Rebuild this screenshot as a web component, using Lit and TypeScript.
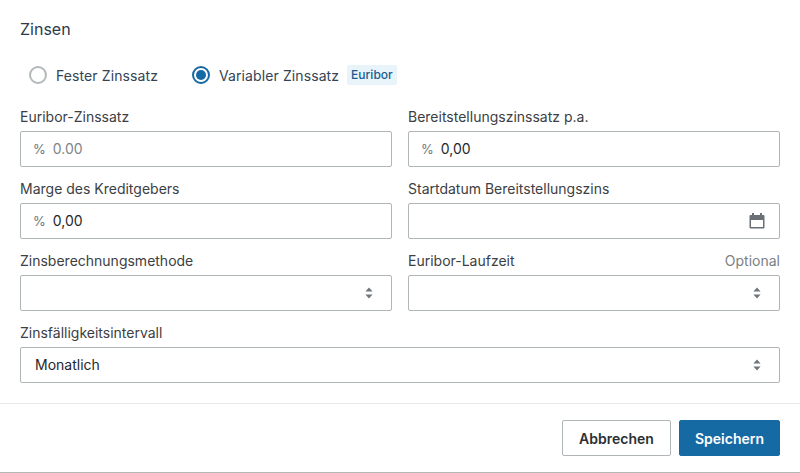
import { LitElement, html, css, svg } from "lit";
import { customElement } from "lit/decorators.js";

const updown = html`<svg class="updown" width="8" height="12" viewBox="0 0 8 12"><path d="M4 0.5 L7.6 4.5 H0.4 Z M4 11.5 L0.4 7.5 H7.6 Z" fill="#6f767c"/></svg>`;

@customElement("app-root")
export class AppRoot extends LitElement {
  static styles = css`
    :host { display: block; width: 800px; height: 473px; box-sizing: border-box; background: #fff; font-family: Inter, "Liberation Sans", sans-serif; color: #2f3d4d; border-bottom: 1px solid #b4b8bb; overflow: hidden; }
    .body { padding: 19px 20px 0; height: 383px; box-sizing: border-box; }
    h2 { margin: 0; font-size: 16px; line-height: 20px; font-weight: 400; color: #2b3a4b; }
    .radios { display: flex; align-items: center; margin: 26px 0 0 9px; height: 20px; }
    .radio { display: flex; align-items: center; gap: 9px; font-size: 14px; letter-spacing: 0.1px; color: #344354; }
    .radio + .radio { margin-left: 34px; }
    .dot { width: 18px; height: 18px; box-sizing: border-box; border-radius: 50%; border: 2px solid #b3b8bb; }
    .dot.on { border-color: #166aa4; display: flex; align-items: center; justify-content: center; }
    .dot.on::after { content: ""; width: 10px; height: 10px; border-radius: 50%; background: #166aa4; }
    .badge { margin-left: 8px; font-size: 12px; font-weight: 500; line-height: 20px; padding: 0 4px; border-radius: 2px; background: #e9f3fa; color: #185d8f; }
    .grid { display: grid; grid-template-columns: 372px 372px; column-gap: 16px; row-gap: 12px; margin-top: 22px; }
    .full { grid-column: 1 / 3; }
    .lab { display: flex; justify-content: space-between; font-size: 14px; line-height: 20px; height: 24px; color: #3c4043; }
    .opt { color: #7b8084; }
    .box { height: 36px; box-sizing: border-box; border: 1px solid #b0b5b8; border-radius: 2px; display: flex; align-items: center; padding: 0 14px 0 12px; font-size: 14px; color: #24282c; }
    .pct { color: #6f767c; font-size: 13px; margin-right: 7px; }
    .txt { padding-bottom: 1px; }
    .ph { color: #7f8488; }
    .sel { padding-left: 14px; padding-right: 18px; justify-content: space-between; }
    .updown, .cal { margin-left: auto; flex: none; }
    .foot { border-top: 1px solid #e6e8e9; padding: 16px 20px 0; display: flex; justify-content: flex-end; gap: 8px; margin-top: 20px; }
    button { height: 36px; box-sizing: border-box; border-radius: 2px; font: 600 14px Inter, "Liberation Sans", sans-serif; padding: 0; cursor: pointer; }
    .sec { width: 109px; background: #fff; border: 1px solid #b0b5b8; color: #2b2f33; }
    .pri { width: 101px; background: #166aa4; border: 1px solid #166aa4; color: #fff; }
  `;

  private money(v: string, ph = false) {
    return html`<div class="box"><span class="pct">%</span><span class="txt ${ph ? "ph" : ""}">${v}</span></div>`;
  }

  render() {
    return html`
      <div class="body">
        <h2>Zinsen</h2>
        <div class="radios">
          <label class="radio"><span class="dot"></span>Fester Zinssatz</label>
          <label class="radio"><span class="dot on"></span>Variabler Zinssatz</label>
          <span class="badge">Euribor</span>
        </div>
        <div class="grid">
          <div><div class="lab">Euribor-Zinssatz</div>${this.money("0.00", true)}</div>
          <div><div class="lab">Bereitstellungszinssatz p.a.</div>${this.money("0,00")}</div>
          <div><div class="lab">Marge des Kreditgebers</div>${this.money("0,00")}</div>
          <div><div class="lab">Startdatum Bereitstellungszins</div>
            <div class="box"><svg class="cal" width="16" height="16" viewBox="0 0 16 16">${svg`<path fill-rule="evenodd" d="M3 0h2v2h6V0h2v2h1.5A1 1 0 0 1 15.5 3v11.5a1 1 0 0 1-1 1h-13a1 1 0 0 1-1-1V3a1 1 0 0 1 1-1H3Z M2 7v7h12V7Z" fill="#6a7075"/>`}</svg></div></div>
          <div><div class="lab">Zinsberechnungsmethode</div><div class="box sel">${updown}</div></div>
          <div><div class="lab"><span>Euribor-Laufzeit</span><span class="opt">Optional</span></div><div class="box sel">${updown}</div></div>
          <div class="full"><div class="lab">Zinsfälligkeitsintervall</div><div class="box sel"><span class="txt">Monatlich</span>${updown}</div></div>
        </div>
      </div>
      <div class="foot">
        <button class="sec">Abbrechen</button>
        <button class="pri">Speichern</button>
      </div>
    `;
  }
}
